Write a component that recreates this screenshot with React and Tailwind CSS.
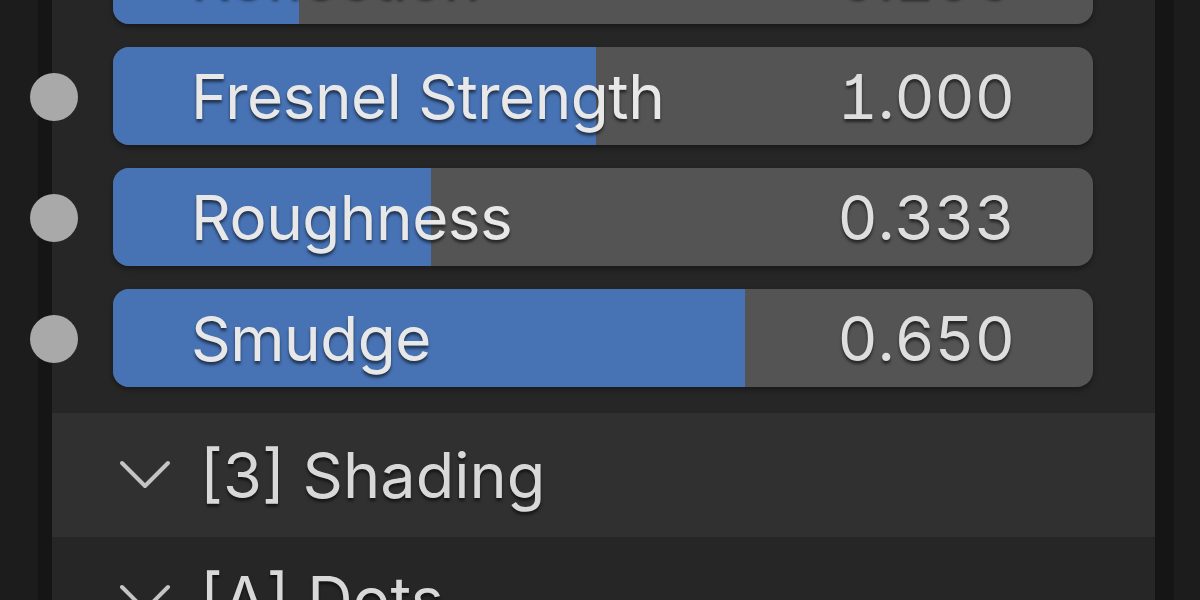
import React from "react";

const ROWS = [
  { label: "Reflection", value: "0.190", fill: 0.19 },
  { label: "Fresnel Strength", value: "1.000", fill: 0.493 },
  { label: "Roughness", value: "0.333", fill: 0.324 },
  { label: "Smudge", value: "0.650", fill: 0.645 },
];

const textShadow = "[text-shadow:0_3px_3px_rgba(0,0,0,0.55)]";

function Chevron() {
  return (
    <svg width="52" height="30" viewBox="0 0 52 30" className="shrink-0">
      <path d="M3 3 L26 26 L49 3" fill="none" stroke="#c4c4c4" strokeWidth="4" strokeLinecap="round" strokeLinejoin="round" />
    </svg>
  );
}

function SliderRow({ label, value, fill }) {
  return (
    <div className="relative flex items-center h-[98px]">
      <div className="absolute left-[-22px] top-[26px] w-12 h-12 rounded-full bg-[#a9a9a9]" />
      <div className="relative ml-[61px] w-[980px] h-full rounded-[16px] bg-[#545454] overflow-hidden shadow-[0_3px_5px_rgba(0,0,0,0.35)]">
        <div className="absolute inset-y-0 left-0 bg-[#4772b3]" style={{ width: `${fill * 100}%` }} />
        <div className={`relative flex items-center justify-between h-full pl-[78px] pr-[78px] text-[62px] text-[#e8e8e8] ${textShadow}`}>
          <span className="tracking-[-0.5px]">{label}</span>
          <span className="text-[#dedede] [font-feature-settings:'tnum','cv01']">{value}</span>
        </div>
      </div>
    </div>
  );
}

function PanelHeader({ title, active }) {
  return (
    <div className={`flex items-center h-[124px] pl-[67px] gap-[29px] ${active ? "bg-[#303030]" : ""}`}>
      <Chevron />
      <span className={`text-[63px] text-[#d8d8d8] ${textShadow}`}>{title}</span>
    </div>
  );
}

export default function App() {
  return (
    <div
      className="w-[1200px] h-[600px] overflow-hidden bg-[#1c1c1c] flex"
      style={{ fontFamily: "Inter, 'DejaVu Sans', sans-serif" }}
    >
      <div className="w-[38px] shrink-0" />
      <div className="relative w-[1136px] shrink-0 border-l-[14px] border-r-[19px] border-[#151515] bg-[#262626]">
        <div className="flex flex-col gap-[23px] mt-[-74px]">
          {ROWS.map((r) => (
            <SliderRow key={r.label} {...r} />
          ))}
        </div>
        <div className="mt-[26px]">
          <PanelHeader title="[3] Shading" active />
          <PanelHeader title="[A] Dots" />
        </div>
      </div>
    </div>
  );
}
